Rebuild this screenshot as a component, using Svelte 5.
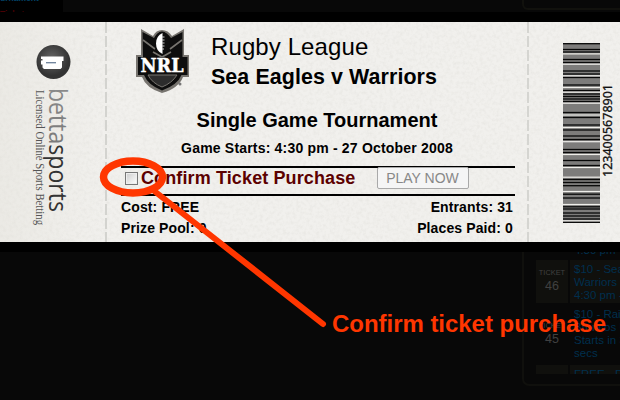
<script>
  // Stripe centres in pixels from the top of the barcode
  const dark = [0.7, 6.5, 9, 16.5, 19.5, 28, 31, 34.5, 42, 47.5, 51, 53.5, 56, 58.5, 69.5, 74.5, 82, 87, 93, 96.5, 106.5, 109.5, 117.5, 122.5, 136.5, 139.5, 142.7, 151.2, 155, 163.8, 166, 170, 173, 176, 179.3];
  const light = [10.9, 21.2, 32.8, 44.5, 49.2, 60.2, 72, 84.5, 98.7, 111.5, 124.5, 134.2, 148.5, 161.5, 177.8];
  const tickets = [
    { id: 46, lines: ['$10 - Sea', 'Warriors', '4:30 pm -'], height: 43, shaded: true },
    { id: 45, lines: ['$10 - Raid', 'Broncos U', 'Starts in 3', 'secs'], height: 58, shaded: false }
  ];
</script>

<div class="page">
  <div class="top">
    <div class="nav"><span class="tab">urnament</span><span class="alert">Tickets</span></div>
    <div class="content"><div class="boxend"></div></div>
  </div>

  <div class="ticket">
    <svg class="grain" width="620" height="220">
      <filter id="paper" x="0" y="0" width="100%" height="100%">
        <feTurbulence type="fractalNoise" baseFrequency=".3" numOctaves="3" seed="8" />
        <feColorMatrix values="0 0 0 0 .4  0 0 0 0 .39  0 0 0 0 .34  0 0 0 1 -.4" />
      </filter>
      <rect width="620" height="220" filter="url(#paper)" />
    </svg>
    <div class="stub">
      <svg width="107" height="220" viewBox="0 22 107 220">
        <defs>
          <radialGradient id="ball" cx=".45" cy=".4"><stop stop-color="#666" /><stop offset="1" stop-color="#333" /></radialGradient>
          <linearGradient id="betta"><stop stop-color="#8a8a8a" /><stop offset="1" stop-color="#666" /></linearGradient>
        </defs>
        <circle cx="53.500" cy="62" r="17" fill="url(#ball)" />
        <path d="M41 56.500h22.500v4.500H62v6.500l-1.500 1.500H44l-1.500-1.500v-3H41v-4h1.500v-1.500H41z" fill="#fff" />
        <path d="M46 62.700h10" stroke="#6c8099" stroke-width="1.300" />
        <g transform="translate(49.300 88) rotate(90)">
          <text class="brand" textLength="124" lengthAdjust="spacingAndGlyphs"><tspan fill="url(#betta)">betta</tspan><tspan fill="#333">sports</tspan></text>
        </g>
        <g transform="translate(36 90) rotate(90)">
          <text class="tag" textLength="135" lengthAdjust="spacingAndGlyphs">Licensed Online Sports Betting</text>
        </g>
      </svg>
    </div>

    <main>
      <header>
        <svg width="54" height="64" viewBox="135 29 54 64">
          <path d="M141 29l12 7q3-6 9-6t10 6l12-7v26h5v22h-6q-4 11-21 16q-16-5-20-16h-6V55h5z" fill="#77746f" />
          <path d="M142.500 32l11.500 6q3-6 8-6t9 6l11.500-6v25h5v18h-6q-4 10-19.500 15.500q-14-5.500-18-15.500h-6V57h5z" fill="#0e0e0e" />
          <path d="M143 40l12 9M182 40l-12 9M153 52l9 5 9-5" stroke="#77746f" stroke-width="1.600" fill="none" />
          <path d="M148 75h29q-5 8-15 12q-10-4-14-12z" fill="#2c2c2c" stroke="#77746f" stroke-width="1" />
          <ellipse cx="162" cy="43" rx="7.500" ry="11.500" fill="#0e0e0e" />
          <path d="M162.500 33q-6.500 3-6.500 10.500t6.500 10.500z" fill="#fff" />
          <path d="M162 37h2.500M162 40h2.500M162 43h2.500M162 46h2.500M162 49h2" stroke="#ccc" />
          <rect x="138" y="57" width="49" height="17" fill="#0e0e0e" />
          <text class="nrl" x="140.500" y="72" textLength="43" lengthAdjust="spacingAndGlyphs">NRL</text>
          <circle cx="180" cy="84" r="1.500" fill="#777" />
        </svg>
        <div class="names"><h1>Rugby League</h1><h2>Sea Eagles v Warriors</h2></div>
      </header>
      <h3>Single Game Tournament</h3>
      <p class="starts">Game Starts: 4:30 pm - 27 October 2008</p>
      <div class="confirm">
        <span class="check"></span><label>Confirm Ticket Purchase</label>
        <button>PLAY NOW</button>
      </div>
      <div class="row"><span>Cost: FREE</span><span>Entrants: 31</span></div>
      <div class="row"><span>Prize Pool: 0</span><span>Places Paid: 0</span></div>
    </main>

    <div class="code">
      <svg width="92" height="220" viewBox="528 22 92 220">
        <g transform="translate(563 43)">
          <rect width="37" height="180" fill="#7d7c7b" />
          {#each dark as y}<rect y={y - 0.65} width="37" height="1.300" fill="#080808" />{/each}
          {#each light as y}<rect y={y - 0.6} width="37" height="1.200" fill="#efeeea" />{/each}
        </g>
        <g transform="translate(611.500 177) rotate(-90)">
          <text class="digits" textLength="93" lengthAdjust="spacingAndGlyphs">1234005678901</text>
        </g>
      </svg>
    </div>
  </div>

  <div class="bottom">
    <div class="list">
      <div class="item first"><div class="num"></div><div class="info"><span>4:30 pm</span></div></div>
      {#each tickets as t}
        <div class="item" class:shaded={t.shaded} style:height="{t.height}px">
          <div class="num"><small>TICKET</small><b>{t.id}</b></div>
          <div class="info">{#each t.lines as l}<span>{l}</span>{/each}</div>
        </div>
      {/each}
      <div class="item shaded last"><div class="num"></div><div class="info"><span>FREE - Pa</span></div></div>
    </div>
  </div>

  <svg class="callout" width="620" height="400">
    <ellipse cx="133" cy="177" rx="29.500" ry="16" />
    <path d="M153 190L323 324" />
    <text x="332" y="332" textLength="274">Confirm ticket purchase</text>
  </svg>
</div>

<style>
  :global(body) { margin: 0; background: #000; }
  .page { position: relative; width: 620px; height: 400px; overflow: hidden; background: #000; font-family: "Liberation Sans", Arial, sans-serif; color: #000; display: flex; flex-direction: column; }
  .top { height: 12px; margin-bottom: 10px; display: flex; }
  .nav { width: 63px; height: 12px; overflow: hidden; background: #000; }
  .tab, .alert { display: block; color: #004468; font: bold 8.500px/10px "Liberation Sans", Arial, sans-serif; margin-top: -7px; }
  .alert { color: #4a0004; margin-top: 6px; }
  .content { flex: 1; background: #080808; padding-left: 459px; overflow: hidden; }
  .boxend { height: 8px; width: 110px; border: solid #11110d; border-width: 0 0 2px 2px; border-radius: 0 0 0 6px; }
  .ticket { position: relative; height: 220px; display: flex; background: #f1f0ed; flex: none; }
  .grain { position: absolute; left: 0; top: 0; opacity: .22; }
  .stub, main, .code { position: relative; box-sizing: border-box; height: 220px; }
  .stub { width: 107px; flex: none; background: repeating-linear-gradient(#d3d3cf 0 11px, transparent 11px 14px) right / 2px 100% no-repeat; }
  .stub svg { background: linear-gradient(90deg, rgba(226, 224, 216, .4), rgba(226, 224, 216, 0)); }
  .code { width: 93px; flex: none; background: repeating-linear-gradient(#d5d5d1 0 11px, transparent 11px 14px) left / 2px 100% no-repeat; padding-left: 1px; }
  svg { display: block; }
  .brand { font: 25px "Open Sans", "Noto Sans", sans-serif; }
  .tag { font: 12px "Liberation Serif", serif; fill: #555; }
  .nrl { font: bold 18px "DejaVu Serif", serif; fill: #fff; stroke: #fff; stroke-width: .5; }
  .digits { font: 13px "Noto Sans", sans-serif; fill: #111; stroke: #111; stroke-width: .3; }
  main { width: 420px; padding: 0 12px 0 14px; }
  header { display: flex; height: 84px; padding: 7px 0 0 14px; box-sizing: border-box; }
  .names { margin-left: 22px; padding-top: 3px; }
  h1, h2, h3, p { margin: 0; white-space: nowrap; }
  h1 { font-weight: 400; font-size: 24px; line-height: 30px; letter-spacing: .1px; }
  h2 { font-size: 21.400px; line-height: 30px; letter-spacing: .1px; }
  h3 { font-size: 20px; line-height: 28px; text-align: center; padding-right: 2px; }
  .starts { font-size: 14px; font-weight: 700; line-height: 20px; padding-top: 4px; height: 28px; margin-bottom: 4px; box-sizing: border-box; text-align: center; padding-right: 2px; letter-spacing: .19px; }
  .confirm { box-sizing: border-box; height: 30px; margin-bottom: 1px; border: solid #000; border-width: 2px 0; display: flex; align-items: center; padding: 0 0 6px 4px; }
  .check { width: 11px; height: 11px; border: 1px solid #777; background: linear-gradient(135deg, #ccc, #fff); margin-right: 3px; box-shadow: inset 0 0 0 1px #eee; }
  label { color: #5c0000; font-weight: 700; font-size: 18px; letter-spacing: .12px; white-space: nowrap; }
  button { margin: 0 0 0 21px; flex: none; width: 92px; height: 22px; border: 1px solid #a9a9a9; border-radius: 2px; padding: 0; background: #f5f5f5; color: #888; font: 14px "Liberation Sans", Arial, sans-serif; }
  .row { display: flex; justify-content: space-between; font-weight: 700; font-size: 14px; line-height: 21px; padding-right: 2px; letter-spacing: .12px; }
  .bottom { margin-top: 10px; height: 148px; box-sizing: border-box; background: #080808; padding-left: 522px; overflow: hidden; }
  .list { height: 132px; width: 110px; border: solid #10100d; border-width: 0 0 2px 2px; border-radius: 0 0 0 7px; padding-left: 12px; }
  .item { display: flex; gap: 2px; margin-bottom: 2px; }
  .num { width: 32px; display: flex; flex-direction: column; align-items: center; justify-content: center; color: #404040; }
  .info { width: 70px; overflow: hidden; padding-left: 4px; color: #002f4d; font-size: 11.500px; line-height: 13px; padding-top: 3px; box-sizing: border-box; }
  .info span { display: block; white-space: nowrap; }
  .shaded .num, .shaded .info { background: #10100d; }
  small { font-size: 7.400px; line-height: 9px; }
  b { font-weight: 400; font-size: 12.500px; line-height: 18px; }
  .first { height: 6px; overflow: hidden; }
  .first .info span { margin-top: -11px; }
  .item.last { height: 9px; overflow: hidden; margin: 0; }
  .callout { position: absolute; left: 0; top: 0; }
  .callout ellipse, .callout path { fill: none; stroke: #ff3600; stroke-linecap: round; }
  .callout ellipse { stroke-width: 7.500; }
  .callout path { stroke-width: 6; }
  .callout text { font: bold 24px "Liberation Sans", Arial, sans-serif; fill: #ff3600; }
</style>
